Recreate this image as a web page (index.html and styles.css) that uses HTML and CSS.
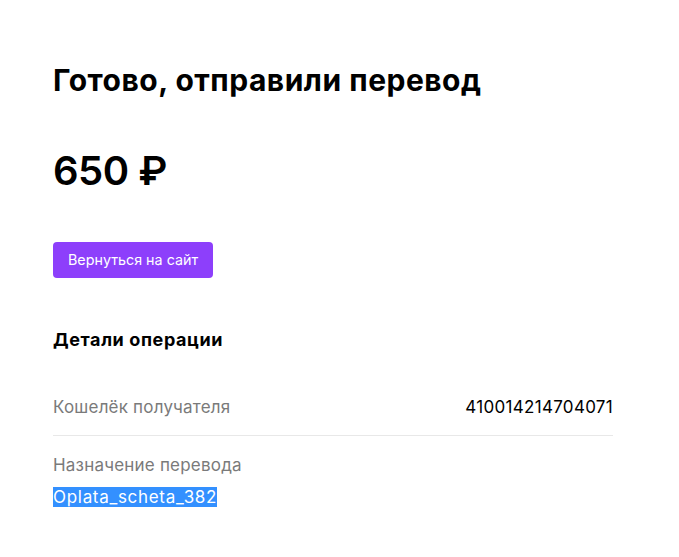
FILE: index.html
```html
<!DOCTYPE html>
<html>
    <head>
        <title>Готово, отправили перевод</title>
        <meta charset="UTF-8">
        <meta name="viewport" content="width=device-width, initial-scale=1.0">
        <link rel="stylesheet" href="styles.css">
    </head>
    <body>
        <div class="main">
            <h1 class="title">Готово, отправили перевод</h1>
            <div class="amount">650 ₽</div>
            <a class="back-button" href="#">Вернуться на сайт</a>

            <h2 class="details-title">Детали операции</h2>
            <div class="details-row">
                <span class="label">Кошелёк получателя</span>
                <span class="value">410014214704071</span>
            </div>
            <div class="details-block">
                <div class="label">Назначение перевода</div>
                <div class="comment"><span class="selected">Oplata_scheta_382</span></div>
            </div>
        </div>
    </body>
</html>
```

FILE: styles.css
```css
body
{
    margin: 0;
    background-color: white;
    color: black;
    font-family: "Inter", "Noto Sans", sans-serif;
}
div.main
{
    width: 560px;
    padding: 60px 0 0 53px;
}
.title
{
    margin: 0;
    font-size: 30px;
    line-height: 40px;
    font-weight: 700;
    letter-spacing: 0.5px;
}
.amount
{
    margin-top: 46px;
    font-size: 40px;
    line-height: 50px;
    font-weight: 600;
    letter-spacing: -0.5px;
}
.back-button
{
    display: inline-block;
    margin-top: 46px;
    padding: 0 15px;
    height: 36px;
    line-height: 36px;
    background-color: #8d3ffb;
    color: white;
    border-radius: 4px;
    font-size: 14.3px;
    text-decoration: none;
}
.details-title
{
    margin: 50px 0 0 0;
    font-size: 18px;
    line-height: 24px;
    font-weight: 700;
    letter-spacing: 0.6px;
}
.details-row
{
    display: flex;
    justify-content: space-between;
    align-items: center;
    margin-top: 44px;
    padding-bottom: 17px;
    border-bottom: 1px solid #e8e8e8;
    font-size: 17px;
    line-height: 22px;
}
.label
{
    color: #7a7a7a;
    letter-spacing: 0.2px;
}
.value
{
    color: black;
    letter-spacing: 0.3px;
}
.details-block
{
    padding-top: 18px;
    font-size: 17px;
    line-height: 22px;
}
.comment
{
    margin-top: 10px;
}
.selected
{
    background-color: #3390ff;
    color: white;
    letter-spacing: 0.7px;
}
```
